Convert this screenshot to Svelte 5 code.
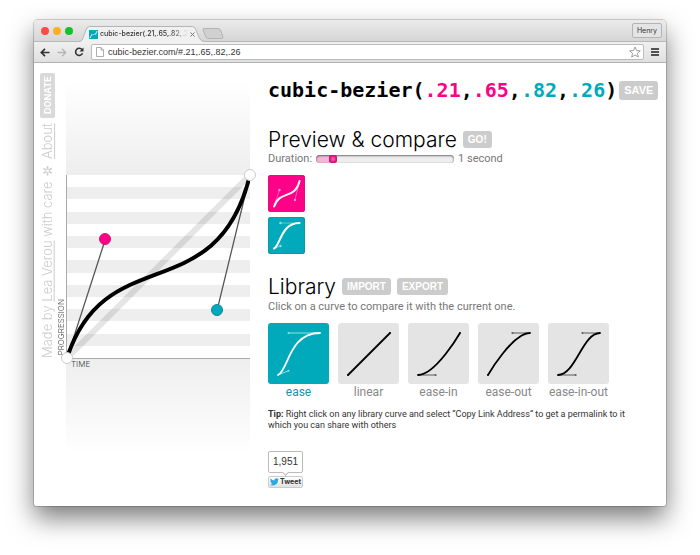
<script>
  const library = [
    { name: 'ease', p: [0.25, 0.1, 0.25, 1] },
    { name: 'linear', p: [0, 0, 1, 1] },
    { name: 'ease-in', p: [0.42, 0, 1, 1] },
    { name: 'ease-out', p: [0, 0, 0.58, 1] },
    { name: 'ease-in-out', p: [0.42, 0, 0.58, 1] }
  ];

  let current = $state([0.21, 0.65, 0.82, 0.26]);
  let selected = $state(0);
  let duration = $state(10);
  let url = $state('cubic-bezier.com/#.21,.65,.82,.26');

  const compared = $derived(library[selected].p);
  const seconds = $derived(duration / 10);
  const short = (n) => String(n).replace(/^0\./, '.');
  const SIZE = 184;

  function curve(p, left, bottom, size) {
    const x = (v) => left + v * size;
    const y = (v) => bottom - v * size;
    return `M${x(0)} ${y(0)}C${x(p[0])} ${y(p[1])} ${x(p[2])} ${y(p[3])} ${x(1)} ${y(1)}`;
  }
</script>

{#snippet thumb(p)}
  {@const x = (v) => 10 + v * 42}
  {@const y = (v) => 52 - v * 42}
  <svg class="curve" viewBox="0 0 61 61" aria-hidden="true">
    <g class="levers">
      <path d="M{x(0)} {y(0)}L{x(p[0])} {y(p[1])}M{x(1)} {y(1)}L{x(p[2])} {y(p[3])}" />
      <circle cx={x(p[0])} cy={y(p[1])} r="1" />
      <circle cx={x(p[2])} cy={y(p[3])} r="1" />
    </g>
    <path class="line" d={curve(p, 10, 52, 42)} />
  </svg>
{/snippet}

<div class="window">
  <header class="tabs">
    <div class="lights">
      <button class="red" aria-label="Close window"></button>
      <button class="amber" aria-label="Minimize window"></button>
      <button class="green" aria-label="Zoom window"></button>
    </div>
    <div class="tab">
      <svg class="shape" viewBox="0 0 130 16" preserveAspectRatio="none" aria-hidden="true">
        <path d="M0 16C4 15 4 12 6 7Q8 1 11 1H117Q120 1 122 7C124 12 125 15 130 16Z" fill="#f0f0f0" />
        <path d="M0 15.5C4 15 4 12 6 7Q8 .5 11 .5H117Q120 .5 122 7C124 12 125 15 130 15.5" fill="none" stroke="#b4b4b4" />
      </svg>
      <svg class="favicon" viewBox="0 0 9 9" aria-hidden="true">
        <rect width="9" height="9" fill="#0ab" />
        <path d="M1 8C3 2 6 7 8 1M1 8L3 4M8 1L6.500 5" fill="none" stroke="#bfe9ee" stroke-width=".8" />
      </svg>
      <span class="title">cubic-bezier(.21,.65,.82,.26)</span>
      <button class="close" aria-label="Close tab">
        <svg viewBox="0 0 5 5" width="5" height="5"><path d="M.5 .5L4.500 4.500M4.500 .5L.5 4.500" stroke="#777" /></svg>
      </button>
    </div>
    <button class="newtab" aria-label="New tab">
      <svg viewBox="0 0 22 11" width="22" height="11"><path d="M2 .5H16Q18 .5 19 3L21 9Q21 10.500 19.500 10.500H6Q4.500 10.500 3.500 8L1 2Q.5 .5 2 .5Z" fill="#d0d0d0" stroke="#b4b4b4" /></svg>
    </button>
    <button class="user">Henry</button>
  </header>

  <nav class="toolbar" aria-label="Browser">
    <button aria-label="Back">
      <svg viewBox="0 0 10 9" width="10" height="9"><path d="M9.500 4.500H1.500M5 .8L1.300 4.500L5 8.200" fill="none" stroke="#333" stroke-width="1.7" /></svg>
    </button>
    <button aria-label="Forward">
      <svg viewBox="0 0 10 9" width="10" height="9"><path d="M.5 4.500H8.500M5 .8L8.700 4.500L5 8.200" fill="none" stroke="#b5b5b5" stroke-width="1.3" /></svg>
    </button>
    <button aria-label="Reload">
      <svg viewBox="0 0 10 10" width="10" height="10"><path d="M8 2.600A3.600 3.600 0 1 0 8.500 6.300" fill="none" stroke="#333" stroke-width="1.6" /><path d="M9.500 .5V4.500H5.500Z" fill="#333" /></svg>
    </button>
    <div class="address">
      <svg viewBox="0 0 8 10" width="8" height="10" aria-hidden="true"><path d="M.5 .5H5L7.500 3V9.500H.5ZM5 .5V3H7.500" fill="#fff" stroke="#999" stroke-width=".8" /></svg>
      <input aria-label="Address" bind:value={url} />
      <svg viewBox="0 0 12 12" width="12" height="12" aria-hidden="true"><path d="M6 1L7.500 4.500L11.300 4.800L8.400 7.300L9.300 11L6 9L2.700 11L3.600 7.300L.7 4.800L4.500 4.500Z" fill="#fff" stroke="#888" stroke-width=".8" /></svg>
    </div>
    <button aria-label="Menu">
      <svg viewBox="0 0 8 8" width="8" height="8"><path d="M0 1H8M0 4H8M0 7H8" stroke="#222" stroke-width="1.600" /></svg>
    </button>
  </nav>

  <div class="page">
    <aside class="credit">
      <p>Made by <a href="#lea">Lea Verou</a> with care ✲ <a href="#about">About</a></p>
      <a class="donate" href="#donate">DONATE</a>
    </aside>

    <section class="graph" aria-label="Curve editor">
      <div class="fade above"></div>
      <div class="plane">
        <svg viewBox="0 0 184 184" aria-hidden="true">
          <path d="M0 184L184 0" stroke="#000" stroke-opacity=".1" stroke-width="6" />
          <path d="M0 184L{current[0] * SIZE} {SIZE - current[1] * SIZE}M184 0L{current[2] * SIZE} {SIZE - current[3] * SIZE}" stroke="#555" stroke-width="1.300" />
          <path d={curve(current, 0, SIZE, SIZE)} fill="none" stroke="#000" stroke-width="4" />
        </svg>
        <span class="axis progression">PROGRESSION</span>
        <span class="axis time">TIME</span>
        <span class="point end" style="left: 0%; bottom: 0%"></span>
        <span class="point end" style="left: 100%; bottom: 100%"></span>
        <button class="point p1" aria-label="First control point" style="left: {current[0] * 100}%; bottom: {current[1] * 100}%"></button>
        <button class="point p2" aria-label="Second control point" style="left: {current[2] * 100}%; bottom: {current[3] * 100}%"></button>
      </div>
      <div class="fade below"></div>
    </section>

    <main>
      <header class="row formula">
        <h1>cubic-bezier(<span class="pink">{short(current[0])}</span>,<span class="pink">{short(current[1])}</span>,<span class="teal">{short(current[2])}</span>,<span class="teal">{short(current[3])}</span>)</h1>
        <button class="action">SAVE</button>
      </header>

      <section class="preview">
        <div class="row">
          <h2>Preview &amp; compare</h2>
          <button class="action small">GO!</button>
        </div>
        <div class="duration">
          <label for="duration">Duration:</label>
          <input id="duration" type="range" min="1" max="90" bind:value={duration} style="--fill: {((duration - 1) / 89) * 100}%" />
          <output for="duration">{seconds} {seconds === 1 ? 'second' : 'seconds'}</output>
        </div>
        <div class="boxes">
          <div class="box pinkbox">{@render thumb(current)}</div>
          <div class="box tealbox">{@render thumb(compared)}</div>
        </div>
      </section>

      <section class="library">
        <div class="row">
          <h2>Library</h2>
          <button class="action small">IMPORT</button>
          <button class="action small">EXPORT</button>
        </div>
        <p class="hint">Click on a curve to compare it with the current one.</p>
        <div class="curves">
          {#each library as item, i}
            <button class="item" class:selected={selected === i} aria-pressed={selected === i} onclick={() => (selected = i)}>
              <span class="tile">{@render thumb(item.p)}</span>
              <span class="name">{item.name}</span>
            </button>
          {/each}
        </div>
        <p class="tip"><strong>Tip:</strong> Right click on any library curve and select “Copy Link Address” to get a permalink to it which you can share with others</p>
      </section>

      <div class="share">
        <a class="count" href="#tweets">1,951</a>
        <button class="tweet">
          <svg viewBox="0 0 24 20" width="9" height="8" aria-hidden="true"><path fill="#2aa9e0" d="M24 2.400a10 10 0 0 1-2.800.8A5 5 0 0 0 23.300.4a10 10 0 0 1-3.100 1.200 4.900 4.900 0 0 0-8.400 4.500A14 14 0 0 1 1.700.9a4.900 4.900 0 0 0 1.500 6.600 4.900 4.900 0 0 1-2.200-.6 4.900 4.900 0 0 0 3.900 4.900 5 5 0 0 1-2.200.1 4.900 4.900 0 0 0 4.600 3.400A10 10 0 0 1 0 17.300 14 14 0 0 0 21.500 4.900 10 10 0 0 0 24 2.400Z" /></svg>
          Tweet
        </button>
      </div>
    </main>
  </div>
</div>

<style>
  :global(body) {
    background: #fff;
    font-family: Inter, "Noto Sans", sans-serif;
    color: #000;
  }
  button,
  input {
    margin: 0;
    padding: 0;
    border: 0;
    background: none;
    font: inherit;
    color: inherit;
  }
  svg {
    display: block;
  }
  h1,
  h2,
  p {
    margin: 0;
    font-weight: inherit;
  }
  .window {
    margin: 20px 34px 48px;
    border-radius: 4px 4px 2px 2px;
    background: #fff;
    box-shadow: 0 0 0 1px rgba(0, 0, 0, 0.16), 0 12px 26px rgba(0, 0, 0, 0.52);
  }

  .tabs {
    display: flex;
    align-items: flex-end;
    height: 21px;
    padding: 0 4px 0 7px;
    border-radius: 4px 4px 0 0;
    border-bottom: 1px solid #b8b8b8;
    background: linear-gradient(#ebebeb, #d6d6d6);
  }
  .lights {
    display: flex;
    align-self: center;
    gap: 4px;
    margin-right: 6px;
  }
  .lights button {
    width: 8px;
    height: 8px;
    border-radius: 50%;
  }
  .red { background: #fb4a48; }
  .amber { background: #fdb024; }
  .green { background: #14c02c; }
  .tab {
    position: relative;
    display: flex;
    align-items: center;
    gap: 2px;
    width: 126px;
    height: 16px;
    padding: 0 10px 0 10px;
    margin-bottom: -1px;
    box-sizing: border-box;
  }
  .shape {
    position: absolute;
    inset: 0;
    width: 100%;
    height: 100%;
  }
  .favicon {
    position: relative;
    flex: none;
    width: 9px;
    height: 9px;
  }
  .title {
    position: relative;
    flex: 1;
    overflow: hidden;
    white-space: nowrap;
    font-size: 7px;
    line-height: 10px;
    font-weight: 500;
    color: #333;
    mask-image: linear-gradient(90deg, #000 80%, transparent);
  }
  .close {
    position: relative;
  }
  .newtab {
    margin: 0 0 2px -3px;
  }
  .user {
    align-self: center;
    margin-left: auto;
    padding: 0 4px;
    border: 1px solid #b4b4b4;
    border-radius: 2px;
    font-size: 7px;
    line-height: 13px;
    color: #333;
    background: #e4e4e4;
  }

  .toolbar {
    display: flex;
    align-items: center;
    gap: 7px;
    height: 20px;
    padding: 0 7px 0 6px;
    border-bottom: 1px solid #b2b2b2;
    background: linear-gradient(#f0f0f0, #e0e0e0);
  }
  .address {
    display: flex;
    flex: 1;
    align-items: center;
    gap: 4px;
    height: 14px;
    padding: 0 2px 0 4px;
    border: 1px solid #bbb;
    border-radius: 2px;
    background: #fff;
  }
  .address input {
    flex: 1;
    min-width: 0;
    font-family: "Liberation Sans", sans-serif;
    font-size: 9px;
    line-height: 13px;
    color: #333;
    outline: 0;
  }

  .page {
    display: flex;
    padding: 13px 9px 18px 6px;
  }
  .credit {
    display: flex;
    flex: none;
    align-items: center;
    align-self: flex-start;
    gap: 5px;
    width: 15px;
    height: 282px;
    writing-mode: vertical-rl;
    transform: rotate(180deg);
    font-size: 13px;
    line-height: 15px;
    font-weight: 300;
    color: #ccc;
    white-space: nowrap;
  }
  .credit a {
    color: inherit;
  }
  .credit .donate {
    padding: 4px 0;
    border-radius: 2px;
    background: #d9d9d9;
    color: #fff;
    font-size: 9px;
    font-weight: 700;
    text-decoration: none;
  }

  .graph {
    flex: none;
    width: 184px;
    margin: 0 18px 0 11px;
  }
  .fade {
    height: 95px;
  }
  .above {
    margin-top: 4px;
    background: linear-gradient(#fff, #eee);
  }
  .below {
    background: linear-gradient(#eee, #fff);
  }
  .plane {
    position: relative;
    box-sizing: border-box;
    height: 184px;
    border-left: 1px solid #aaa;
    border-bottom: 1px solid #aaa;
    background: repeating-linear-gradient(0deg, #fff 0 calc(100% / 15), #eee calc(100% / 15) calc(200% / 15));
  }
  .plane svg {
    width: 100%;
    height: 100%;
  }
  .axis {
    position: absolute;
    font-size: 8px;
    line-height: 9px;
    font-weight: 300;
    color: #444;
  }
  .progression {
    left: -10px;
    bottom: 3px;
    writing-mode: vertical-rl;
    transform: rotate(180deg);
  }
  .time {
    left: 4px;
    top: 100%;
    padding-top: 2px;
  }
  .point {
    position: absolute;
    box-sizing: border-box;
    width: 12px;
    height: 12px;
    margin: 0 0 -6px -6px;
    border-radius: 50%;
    border: 1px solid #ccc;
  }
  .end { background: #fff; }
  .p1 { background: #f08; border-color: #d0156e; }
  .p2 { background: #0ab; border-color: #0e8998; }

  main {
    flex: 1;
    min-width: 0;
  }
  .row {
    display: flex;
    align-items: center;
    gap: 6px;
  }
  .formula {
    gap: 2px;
    height: 28px;
  }
  h1 {
    font: bold 20px/28px "DejaVu Sans Mono", monospace;
    white-space: nowrap;
  }
  .pink { color: #f08; }
  .teal { color: #0ab; }
  .action {
    flex: none;
    padding: 0 5px;
    border-radius: 3px;
    background: #ccc;
    color: #fff;
    font-family: "Liberation Sans", sans-serif;
    font-size: 11px;
    line-height: 19px;
    font-weight: 700;
  }
  .small {
    font-size: 10px;
    line-height: 17px;
  }
  h2 {
    font-size: 21px;
    line-height: 27px;
    font-weight: 300;
  }
  .preview {
    margin-top: 22px;
  }
  .duration {
    display: flex;
    align-items: center;
    gap: 4px;
    font-family: Roboto, sans-serif;
    font-size: 11px;
    line-height: 12px;
    color: #777;
  }
  .duration input {
    appearance: none;
    width: 138px;
    height: 8px;
    border-radius: 4px;
    background: linear-gradient(90deg, #f3b6d7 var(--fill), #eee var(--fill));
    box-shadow: inset 0 1px 2px rgba(0, 0, 0, 0.5), inset 0 0 1px rgba(0, 0, 0, 0.4);
  }
  .duration input::-webkit-slider-thumb {
    appearance: none;
    width: 8px;
    height: 8px;
    border-radius: 3px;
    background: radial-gradient(#ff6bb8, #e0107c 60%);
    box-shadow: inset 0 0 1px #90004c;
  }
  .boxes {
    display: grid;
    gap: 5px;
    margin-top: 10px;
  }
  .box {
    width: 37px;
    height: 37px;
    border-radius: 3px;
    color: #fff;
  }
  .pinkbox { background: #f08; box-shadow: inset 0 0 0 1px #e0107c; }
  .tealbox { background: #0ab; box-shadow: inset 0 0 0 1px #0f98a6; }
  .curve {
    width: 100%;
    height: 100%;
    fill: none;
    stroke: currentColor;
  }
  .line {
    stroke-width: 1.8;
    stroke-linecap: round;
  }
  .box .line {
    stroke-width: 3.4;
  }
  .levers {
    opacity: 0.6;
  }
  .levers circle {
    fill: currentColor;
    stroke: none;
  }
  .box .levers circle {
    r: 2px;
  }

  .library {
    margin-top: 19px;
  }
  .hint {
    font-family: Roboto, sans-serif;
    font-size: 11px;
    line-height: 13px;
    color: #777;
  }
  .curves {
    display: flex;
    gap: 9px;
    margin-top: 10px;
  }
  .item {
    display: flex;
    flex-direction: column;
    align-items: center;
    width: 61px;
    cursor: pointer;
  }
  .tile {
    width: 61px;
    height: 61px;
    border-radius: 3px;
    background: #e4e4e4;
  }
  .name {
    font-family: Roboto, sans-serif;
    font-size: 12px;
    line-height: 16px;
    white-space: nowrap;
    color: #888;
  }
  .selected .tile {
    background: #0ab;
    color: #fff;
  }
  .selected .name {
    color: #0f98aa;
  }
  .tip {
    max-width: 372px;
    margin-top: 9px;
    font-family: Roboto, sans-serif;
    font-size: 9px;
    line-height: 11px;
    color: #333;
  }
  .share {
    display: grid;
    gap: 3px;
    width: 35px;
    margin-top: 20px;
  }
  .count {
    position: relative;
    box-sizing: border-box;
    border: 1px solid #bbb;
    border-radius: 2px;
    font-family: "Liberation Sans", sans-serif;
    font-size: 10px;
    line-height: 20px;
    text-align: center;
    text-decoration: none;
    color: #333;
  }
  .count::after {
    content: "";
    position: absolute;
    left: 14px;
    bottom: -3px;
    width: 4px;
    height: 4px;
    border: solid #bbb;
    border-width: 0 1px 1px 0;
    background: #fff;
    transform: rotate(45deg);
  }
  .tweet {
    display: flex;
    align-items: center;
    justify-content: center;
    gap: 1px;
    border: 1px solid #ccc;
    border-radius: 2px;
    background: linear-gradient(#fff, #e2e2e2);
    font-size: 7px;
    line-height: 10px;
    font-weight: 700;
    color: #333;
  }
</style>
